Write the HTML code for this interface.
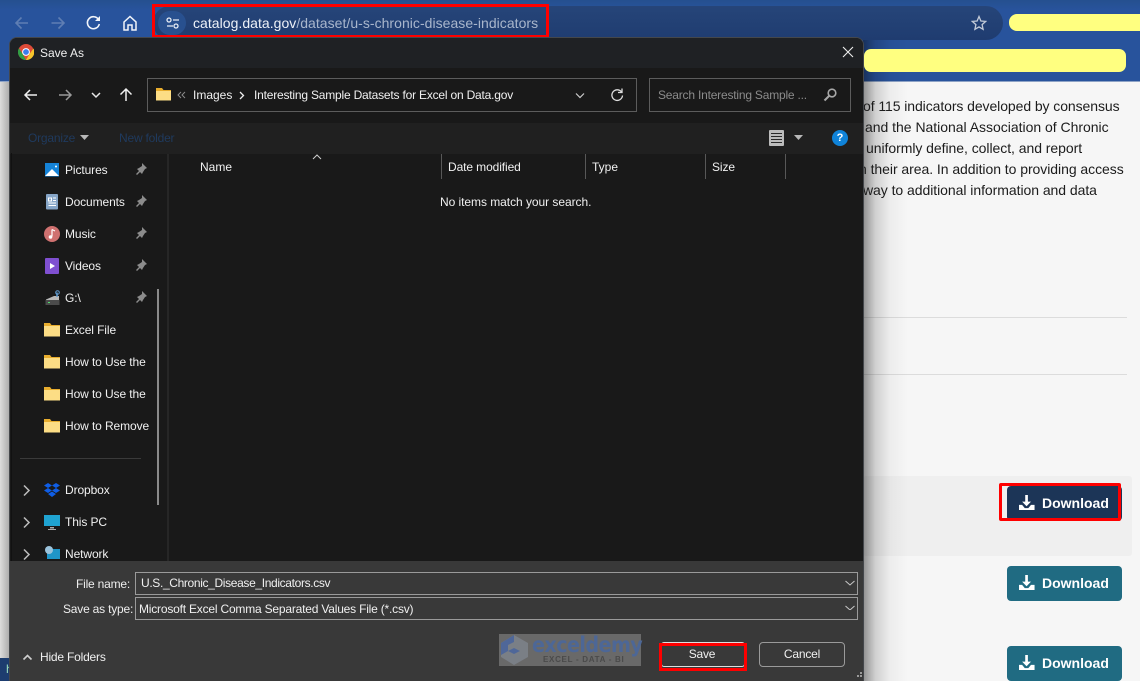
<!DOCTYPE html>
<html><head><meta charset="utf-8">
<style>
html,body{margin:0;padding:0;width:1140px;height:681px;overflow:hidden;background:#f6f6f6}
body{position:relative;font-family:"Liberation Sans",sans-serif}
div,span,svg{position:absolute}
.t{white-space:nowrap;color:#f0f0f0;font-size:12px;line-height:16px;letter-spacing:-.2px}
.s{letter-spacing:-.1px}
.p{white-space:nowrap;color:#1c1c1c;font-size:14px;line-height:21px;left:863px}
.btn{left:1007px;width:115px;height:35px;border-radius:4px;background:#206b82;color:#fff;font-weight:bold;font-size:14px}
.btn span{left:35px;top:8px;line-height:18px;white-space:nowrap}
.btn svg{left:12px;top:9px}
.box{border:1px solid #8a8a8a;box-sizing:border-box}
</style></head><body>
<div style="left:0;top:0;width:1140px;height:81px;background:linear-gradient(#25508f,#28539c 12%,#28539c)"></div>
<div style="left:0;top:81px;width:1140px;height:1px;background:#8ea3c6"></div>
<div style="left:153px;top:6px;width:850px;height:34px;border-radius:17px;background:linear-gradient(#264579,#1f3c70)"></div>
<div style="left:158px;top:11px;width:28px;height:24px;border-radius:14px;background:#28508f"></div>
<svg style="left:0;top:0" width="190" height="40" fill="none">
<g stroke="#5f7eb3" stroke-width="1.6"><path d="M16 23h12M21.500 17.500L16 23l5.500 5.500"/><path d="M64 23H51.500M58.500 17.500L64 23l-5.500 5.500"/></g>
<path d="M98.500 19.500a6 6 0 1 0 .8 4.500" stroke="#f2f5fa" stroke-width="1.600"/><path d="M100 16v5h-5z" fill="#f2f5fa"/>
<path d="M124 22l6-5.500 6 5.500v8h-4v-5h-4v5h-4z" stroke="#f2f5fa" stroke-width="1.500"/>
<g stroke="#e8edf5" stroke-width="1.300"><circle cx="169" cy="20" r="2"/><path d="M173 20h6M167 26h6"/><circle cx="176" cy="26" r="2"/></g>
</svg>
<div class="t" style="left:193px;top:14px;font-size:14px;line-height:18px;letter-spacing:.035px;color:#eef2f8">catalog.data.gov<span style="position:static;color:#a9b6cc">/dataset/u-s-chronic-disease-indicators</span></div>
<div style="left:152px;top:4px;width:397px;height:34px;border:3px solid #f00;box-sizing:border-box"></div>
<svg style="left:971px;top:15px" width="16" height="16" fill="none"><path d="M8 1.500l1.900 4.500 4.800.4-3.600 3.200 1 4.700L8 11.900l-4.100 2.400 1-4.700L1.300 6.400 6.100 6z" stroke="#c3cbd8" stroke-width="1.300"/></svg>
<div style="left:1009px;top:14px;width:140px;height:17px;border-radius:8px;background:#ffff80"></div>

<div style="left:0;top:82px;width:10px;height:576px;background:linear-gradient(90deg,#dcdcdc,#a8a8a8)"></div>
<div style="left:0;top:658px;width:10px;height:23px;background:#1d3d6f;color:#9db;font-size:12px;line-height:22px;padding-left:6px;box-sizing:border-box;overflow:hidden">h</div>

<div style="left:863px;top:317px;width:264px;height:1px;background:#dcdcdc"></div>
<div style="left:863px;top:374px;width:264px;height:1px;background:#dcdcdc"></div>
<div style="left:863px;top:476px;width:269px;height:80px;background:#efefef;border-radius:3px"></div>
<div style="left:863px;top:40px;width:45px;height:641px;background:linear-gradient(90deg,rgba(0,0,0,.42),rgba(0,0,0,.16) 27%,rgba(0,0,0,.04) 60%,rgba(0,0,0,0))"></div>
<div style="left:864px;top:49px;width:262px;height:23px;border-radius:7px;background:#ffff80"></div>

<div class="p" style="top:96px;letter-spacing:-.08px">of 115 indicators developed by consensus</div>
<div class="p" style="top:117px;left:865px;letter-spacing:-.02px">and the National Association of Chronic</div>
<div class="p" style="top:138px;left:866px;letter-spacing:-.05px">uniformly define, collect, and report</div>
<div class="p" style="top:159px;left:859px;letter-spacing:-.05px">n their area. In addition to providing access</div>
<div class="p" style="top:180px;left:863px;letter-spacing:-.05px">way to additional information and data</div>

<div class="btn" style="top:486px;background:#1c3557"><svg width="16" height="15" viewBox="0 0 18 16" preserveAspectRatio="none" fill="#fff"><path d="M7 0h3v7h3.500L8.500 12 3.500 7H7z"/><path d="M0 10.500h3.500l3 3.500h4l3-3.500H17.500V16H0z"/></svg><span>Download</span></div>
<div style="left:999px;top:483px;width:122px;height:38px;border:3px solid #f00;border-radius:2px;box-sizing:border-box"></div>
<div style="left:1002px;top:486px;width:5px;height:32px;background:#f0f0f0"></div>
<div class="btn" style="top:566px"><svg width="16" height="15" viewBox="0 0 18 16" preserveAspectRatio="none" fill="#fff"><path d="M7 0h3v7h3.500L8.500 12 3.500 7H7z"/><path d="M0 10.500h3.500l3 3.500h4l3-3.500H17.500V16H0z"/></svg><span>Download</span></div>
<div class="btn" style="top:646px"><svg width="16" height="15" viewBox="0 0 18 16" preserveAspectRatio="none" fill="#fff"><path d="M7 0h3v7h3.500L8.500 12 3.500 7H7z"/><path d="M0 10.500h3.500l3 3.500h4l3-3.500H17.500V16H0z"/></svg><span>Download</span></div>

<!-- dialog -->
<div style="left:9px;top:37px;width:855px;height:644px;background:#191919;border:1px solid #44474b;border-bottom:0;border-radius:8px 8px 0 0;box-sizing:border-box;overflow:hidden">
 <div style="left:0;top:0;width:853px;height:30px;background:#1f2124"></div>
 <div style="left:0;top:30px;width:853px;height:56px;background:#191919"></div>
 <div style="left:0;top:85px;width:853px;height:31px;background:#202020"></div>
 <div style="left:0;top:523px;width:853px;height:121px;background:#393939"></div>
</div>
<!-- chrome logo -->
<svg style="left:18px;top:44px" width="16" height="16" viewBox="0 0 16 16"><circle cx="8" cy="8" r="8" fill="#dd4b39"/><path d="M8 16A8 8 0 0 1 .9 4.200L4.600 10 8 16z" fill="#2f9e44"/><path d="M8 16l3.500-6 4-5.500A8 8 0 0 1 8 16z" fill="#f7c52b"/><circle cx="8" cy="8" r="3.900" fill="#fff"/><circle cx="8" cy="8" r="2.900" fill="#3b7ded"/></svg>
<div class="t" style="left:40px;top:45px;letter-spacing:0">Save As</div>
<svg style="left:841px;top:45px" width="14" height="14" fill="none" stroke="#eee" stroke-width="1.100"><path d="M2 2l10 10M12 2L2 12"/></svg>

<!-- nav -->
<svg style="left:20px;top:84px" width="120" height="22" fill="none" stroke-width="1.500">
<path d="M5 11h12M10 6l-5 5 5 5" stroke="#f0f0f0"/><path d="M39 11h12M46 6l5 5-5 5" stroke="#9a9a9a"/>
<path d="M72 9l4 4 4-4" stroke="#e8e8e8"/><path d="M106 17V5.500M100.500 10.500l5.500-5.500 5.500 5.500" stroke="#f0f0f0"/></svg>
<div class="box" style="left:147px;top:78px;width:490px;height:34px;border-color:#5c5c5c"></div>
<svg style="left:156px;top:87px" width="16" height="14"><path d="M0 1h6l1.500 2H15v2H0z" fill="#e8ad2e"/><path d="M0 4h15v9.500H0z" fill="#fcdd85"/></svg>
<svg style="left:177px;top:91px" width="10" height="8" fill="none" stroke="#8a8a8a"><path d="M4 1L1 4l3 3M8 1L5 4l3 3"/></svg>
<div class="t" style="left:193px;top:87px;letter-spacing:0">Images</div>
<svg style="left:238px;top:91px" width="8" height="9" fill="none" stroke="#eee" stroke-width="1.300"><path d="M2 1l3.500 3.500L2 8"/></svg>
<div class="t" style="left:254px;top:87px">Interesting Sample Datasets for Excel on Data.gov</div>
<svg style="left:574px;top:92px" width="12" height="8" fill="none" stroke="#ccc" stroke-width="1.200"><path d="M2 1.500l4 4 4-4"/></svg>
<svg style="left:610px;top:88px" width="14" height="14" fill="none" stroke="#ddd" stroke-width="1.300"><path d="M11.500 4a5.300 5.300 0 1 0 1 3.500"/><path d="M12 .5v4H8"/></svg>
<div class="box" style="left:649px;top:78px;width:202px;height:34px;border-color:#5c5c5c"></div>
<div class="t" style="left:658px;top:87px;color:#8b8b8b">Search Interesting Sample ...</div>
<svg style="left:822px;top:87px" width="16" height="16" fill="none" stroke="#a8a8a8" stroke-width="1.600"><circle cx="10" cy="6" r="3.800"/><path d="M7 9l-4.500 4.500" stroke-width="2"/></svg>

<!-- toolbar -->
<div class="t" style="left:28px;top:130px;color:#1f3a5e">Organize</div>
<svg style="left:80px;top:135px" width="10" height="6"><path d="M0 0h9L4.500 5z" fill="#b8b8b8"/></svg>
<div class="t" style="left:119px;top:130px;color:#1f3a5e">New folder</div>
<div style="left:769px;top:130px;width:15px;height:16px;background:#bcbcbc;border-radius:1px"></div>
<svg style="left:769px;top:130px" width="15" height="16" stroke="#2a2a2a"><path d="M2 3.500h11M2 6.500h11M2 9.500h11M2 12.500h11"/></svg>
<svg style="left:794px;top:135px" width="10" height="6"><path d="M0 0h9L4.500 5z" fill="#b8b8b8"/></svg>
<div style="left:832px;top:130px;width:16px;height:16px;border-radius:8px;background:#0f83d9;color:#fff;font-size:11px;font-weight:bold;line-height:16px;text-align:center">?</div>

<!-- headers -->
<svg style="left:312px;top:154px" width="11" height="6" fill="none" stroke="#cfcfcf"><path d="M1 5l4-4 4 4"/></svg>
<div class="t" style="left:200px;top:159px;letter-spacing:0">Name</div>
<div class="t s" style="left:448px;top:159px">Date modified</div>
<div class="t" style="left:592px;top:159px;letter-spacing:0">Type</div>
<div class="t" style="left:712px;top:159px;letter-spacing:-.1px">Size</div>
<div style="left:441px;top:154px;width:1px;height:25px;background:#585858"></div>
<div style="left:585px;top:154px;width:1px;height:25px;background:#585858"></div>
<div style="left:705px;top:154px;width:1px;height:25px;background:#585858"></div>
<div style="left:785px;top:154px;width:1px;height:25px;background:#585858"></div>
<div class="t" style="left:440px;top:194px;letter-spacing:-.05px">No items match your search.</div>

<!-- sidebar -->
<div style="left:167px;top:154px;width:2px;height:407px;background:#262626"></div>
<div style="left:157px;top:289px;width:2px;height:216px;background:#8a8a8a"></div>
<div style="left:11px;top:153px;width:1px;height:408px;background:#111"></div>
<svg style="left:45px;top:163px" width="15" height="14"><rect width="14" height="13.500" fill="#1583d8"/><path d="M0 13l7-7 7 7z" fill="#fff"/><circle cx="11" cy="3.500" r="1" fill="#fff"/></svg>
<div class="t s" style="left:65px;top:162px">Pictures</div>
<svg style="left:46px;top:194px" width="13" height="16"><rect width="12" height="15.500" rx="1" fill="#86a5c7"/><path d="M2.500 4h3v3h-3zM7 4h3M7 6.500h3M2.500 9h7.500M2.500 11.500h7.500" stroke="#fff" fill="none"/></svg>
<div class="t s" style="left:65px;top:194px">Documents</div>
<svg style="left:44px;top:226px" width="16" height="16"><circle cx="8" cy="8" r="8" fill="#cf7170"/><path d="M8 3.500v7" stroke="#fff" stroke-width="1.200"/><circle cx="6.500" cy="11" r="1.800" fill="#fff"/><path d="M8 3.500l3 1.500" stroke="#fff"/></svg>
<div class="t s" style="left:65px;top:226px">Music</div>
<svg style="left:45px;top:258px" width="15" height="16"><rect width="14" height="16" rx="1" fill="#7f4fd0"/><path d="M5 5l5 3-5 3z" fill="#fff"/></svg>
<div class="t s" style="left:65px;top:258px">Videos</div>
<svg style="left:45px;top:290px" width="16" height="16"><path d="M1 9.500L9 6h5v4H1z" fill="#b8b8b8"/><rect x="0.500" y="10" width="14" height="5" fill="#4b4b4b"/><rect x="3" y="12" width="2" height="1" fill="#4fdc6c"/><path d="M12 7V2.500" stroke="#5f9bd0" stroke-width="1.500"/><circle cx="12.500" cy="2.500" r="1.800" fill="none" stroke="#5f9bd0"/></svg>
<div class="t s" style="left:65px;top:290px">G:\</div>
<svg style="left:135px;top:163px" width="12" height="142" fill="#8c8c8c">
<path d="M7 0l5 5-2 1-2 3-1 2-2-2-3 3-1-1 3-3-2-2 2-1 3-2z"/>
<path d="M7 32l5 5-2 1-2 3-1 2-2-2-3 3-1-1 3-3-2-2 2-1 3-2z"/>
<path d="M7 64l5 5-2 1-2 3-1 2-2-2-3 3-1-1 3-3-2-2 2-1 3-2z"/>
<path d="M7 96l5 5-2 1-2 3-1 2-2-2-3 3-1-1 3-3-2-2 2-1 3-2z"/>
<path d="M7 128l5 5-2 1-2 3-1 2-2-2-3 3-1-1 3-3-2-2 2-1 3-2z"/>
</svg>
<svg style="left:44px;top:323px" width="16" height="14"><path d="M0 0h6l1.500 2H16v2H0z" fill="#e8ad2e"/><path d="M0 3h16v10.500H0z" fill="#fcdd85"/></svg>
<div class="t s" style="left:65px;top:322px">Excel File</div>
<svg style="left:44px;top:355px" width="16" height="14"><path d="M0 0h6l1.500 2H16v2H0z" fill="#e8ad2e"/><path d="M0 3h16v10.500H0z" fill="#fcdd85"/></svg>
<div class="t s" style="left:65px;top:354px">How to Use the</div>
<svg style="left:44px;top:387px" width="16" height="14"><path d="M0 0h6l1.500 2H16v2H0z" fill="#e8ad2e"/><path d="M0 3h16v10.500H0z" fill="#fcdd85"/></svg>
<div class="t s" style="left:65px;top:386px">How to Use the</div>
<svg style="left:44px;top:419px" width="16" height="14"><path d="M0 0h6l1.500 2H16v2H0z" fill="#e8ad2e"/><path d="M0 3h16v10.500H0z" fill="#fcdd85"/></svg>
<div style="left:65px;top:418px;width:84px;height:16px;overflow:hidden"><div class="t s" style="left:0;top:0">How to Remove</div></div>
<div style="left:20px;top:458px;width:121px;height:1px;background:#3a3a3a"></div>
<svg style="left:22px;top:484px" width="10" height="78" fill="none" stroke="#bdbdbd" stroke-width="1.500"><path d="M2 1.500L7 6.500l-5 5M2 33.500l5 5-5 5M2 65.500l5 5-5 5"/></svg>
<svg style="left:44px;top:483px" width="16" height="15" fill="#0f5ee6"><path d="M4 0l4 2.500L4 5 0 2.500zM12 0l4 2.500L12 5 8 2.500zM4 5l4 2.500L4 10 0 7.500zM12 5l4 2.500L12 10 8 7.500zM4 11l4-2.500L12 11l-4 3z"/></svg>
<div class="t s" style="left:65px;top:482px">Dropbox</div>
<svg style="left:44px;top:515px" width="16" height="15"><rect width="16" height="11" fill="#1fa3d1"/><path d="M6 12h4v1.500H6z" fill="#aaa"/><path d="M4 14h8v1H4z" fill="#aaa"/></svg>
<div class="t s" style="left:65px;top:514px">This PC</div>
<svg style="left:44px;top:546px" width="16" height="15"><rect x="3" y="3" width="13" height="10" fill="#1f95c9"/><circle cx="5" cy="4" r="4" fill="#9bc3dc"/></svg>
<div class="t s" style="left:65px;top:546px">Network</div>

<!-- bottom -->
<div class="t" style="left:76px;top:576px;color:#eee">File name:</div>
<div class="t" style="left:63px;top:601px;color:#eee">Save as type:</div>
<div class="box" style="left:135px;top:572px;width:723px;height:23px;border-color:#9a9a9a"></div>
<div class="box" style="left:135px;top:597px;width:723px;height:23px;border-color:#9a9a9a"></div>
<div class="t" style="left:141px;top:575px;letter-spacing:-.35px">U.S._Chronic_Disease_Indicators.csv</div>
<div class="t" style="left:139px;top:601px">Microsoft Excel Comma Separated Values File (*.csv)</div>
<svg style="left:844px;top:580px" width="12" height="30" fill="none" stroke="#c8c8c8"><path d="M1.500 1l4.500 4 4.500-4M1.500 26l4.500 4 4.500-4"/></svg>
<svg style="left:22px;top:653px" width="12" height="8" fill="none" stroke="#cfcfcf" stroke-width="1.600"><path d="M1.500 6.500l4-4 4 4"/></svg>
<div class="t" style="left:40px;top:649px">Hide Folders</div>

<!-- watermark -->
<div style="left:499px;top:634px;width:142px;height:32px;background:#696969"></div>
<svg style="left:500px;top:634px" width="30" height="32"><path d="M14 1L28 9v14l-14 8L1 23V9z" fill="#7a7f86"/><path d="M14 1L1 9v12l7-4v-6l6-3z" fill="#4f6799"/><path d="M8 17l6 3 6-3-6-3z" fill="#4f6799"/></svg>
<div style="left:532px;top:632px;font-size:21px;line-height:26px;font-weight:bold;color:#4d6796;white-space:nowrap;font-family:'DejaVu Sans',sans-serif;letter-spacing:-.6px;transform:scaleX(.91);transform-origin:0 0">exceldemy</div>
<div style="left:543px;top:654px;font-size:8px;line-height:11px;font-weight:bold;color:#4a4a4a;white-space:nowrap;letter-spacing:.7px">EXCEL - DATA - BI</div>

<div style="left:661px;top:642px;width:84px;height:25px;border:1px solid #ddd;border-radius:3px;box-sizing:border-box"></div>
<div class="t" style="left:662px;top:646px;width:80px;text-align:center">Save</div>
<div style="left:659px;top:643px;width:88px;height:28px;border:3px solid #f00;box-sizing:border-box"></div>
<div style="left:759px;top:642px;width:86px;height:25px;border:1px solid #9a9a9a;border-radius:4px;box-sizing:border-box"></div>
<div class="t" style="left:759px;top:646px;width:86px;text-align:center">Cancel</div>
<svg style="left:855px;top:672px" width="8" height="8" fill="#9a9a9a"><path d="M5 0h2v2H5zM2 3h2v2H2zM5 3h2v2H5z"/></svg>
</body></html>
